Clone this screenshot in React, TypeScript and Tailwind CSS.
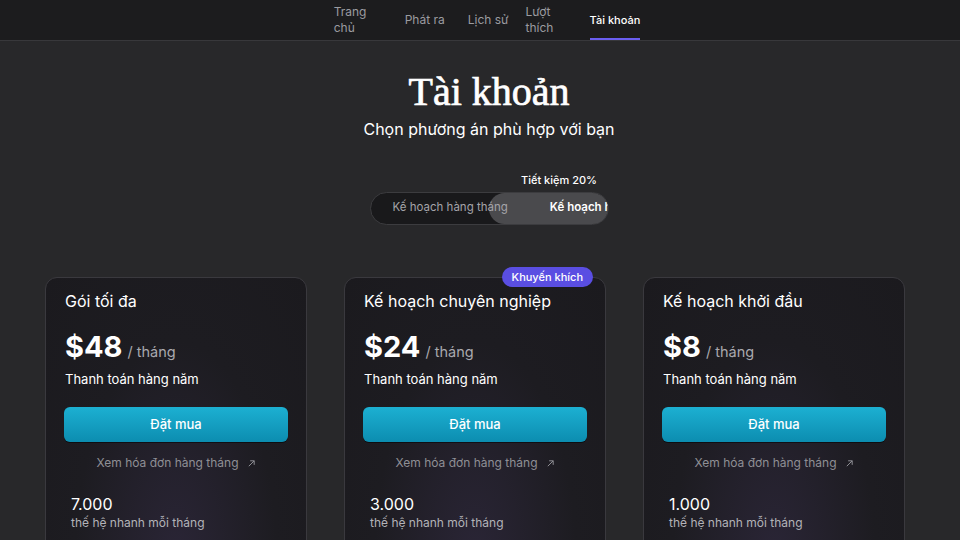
import React from "react";

type Plan = {
  name: string;
  price: string;
  credits: string;
  badge?: string;
};

const plans: Plan[] = [
  { name: "Gói tối đa", price: "$48", credits: "7.000" },
  { name: "Kế hoạch chuyên nghiệp", price: "$24", credits: "3.000", badge: "Khuyến khích" },
  { name: "Kế hoạch khởi đầu", price: "$8", credits: "1.000" },
];

const navItems = [
  { label: "Trang chủ", w: "w-[44px]", ml: "" },
  { label: "Phát ra", w: "", ml: "ml-[27px]" },
  { label: "Lịch sử", w: "", ml: "ml-[23px]" },
  { label: "Lượt thích", w: "w-[34px]", ml: "ml-[17px]" },
];

const PlanCard: React.FC<{ plan: Plan }> = ({ plan }) => {
  return (
    <div className="relative h-[300px] rounded-[12px] border border-[#3a393e] bg-[radial-gradient(ellipse_at_50%_95%,#2a2536_0%,#1d1c21_55%,#1b1a1e_100%)] px-[18px] pt-[11px]">
      {plan.badge && (
        <div className="absolute right-[12px] top-[-11px] rounded-full bg-[#5a4ee2] px-[10px] py-[2px] text-[11px] font-medium text-white">
          {plan.badge}
        </div>
      )}
      <div className="pl-[1px] text-[16px] text-white">{plan.name}</div>

      {/* price */}
      <div className="mt-[17px] flex items-baseline pl-[1px]">
        <span className="text-[29px] font-bold leading-[34px] text-white">{plan.price}</span>
        <span className="ml-[5px] text-[14.5px] text-[#a9a9ae]">/ tháng</span>
      </div>
      <div className="mt-[6px] pl-[1px] text-[13px] text-white">Thanh toán hàng năm</div>

      <button className="mt-[18px] h-[35px] w-full rounded-[6px] bg-gradient-to-b from-[#1cb0d2] to-[#0c8db0] text-[13px] font-medium text-white shadow-[0_1px_0_rgba(0,0,0,0.5)]">
        Đặt mua
      </button>

      <div className="mt-[12px] flex items-center justify-center gap-[8px] text-[12px] text-[#8f8f95]">
        <span>Xem hóa đơn hàng tháng</span>
        <svg width="9" height="9" viewBox="0 0 10 10" fill="none" stroke="currentColor" strokeWidth="1.1">
          <path d="M2 8 L8 2 M3.5 2 H8 V6.5" />
        </svg>
      </div>

      <div className="mt-[22px] pl-[7px]">
        <div className="text-[16px] leading-[20px] text-white">{plan.credits}</div>
        <div className="text-[12px] leading-[18px] text-[#b3b3b8]">thế hệ nhanh mỗi tháng</div>
      </div>
    </div>
  );
};

export default function App() {
  return (
    <div className="h-[540px] w-[960px] overflow-hidden bg-[#28282a] font-['Inter','Noto_Sans',sans-serif]">
      {/* Top navigation */}
      <nav className="flex h-[41px] items-stretch justify-center border-b border-[#38383b] bg-[#1c1c1e] pl-[14px] text-[12px] text-[#9b9ba0]">
        {navItems.map((item) => (
          <div key={item.label} className={`flex items-center leading-[16px] ${item.w} ${item.ml}`}>
            {item.label}
          </div>
        ))}
        <div className="relative ml-[30px] flex items-center text-[11px] font-medium text-white">
          Tài khoản
          <div className="absolute bottom-[0px] left-0 right-0 h-[2px] bg-[#6a5ef0]" />
        </div>
      </nav>

      {/* Heading */}
      <div className="mt-[27px] flex flex-col items-center pl-[18px]">
        <h1 className="font-['Liberation_Serif',serif] text-[40px] leading-[48px] text-white [-webkit-text-stroke:0.7px_white]">
          Tài khoản
        </h1>
        <p className="mt-[1px] text-[16px] text-white">Chọn phương án phù hợp với bạn</p>
      </div>

      {/* Billing toggle */}
      <div className="mt-[31px] flex flex-col items-center pl-[18px]">
        <div className="ml-[140px] text-[11px] font-medium text-white">Tiết kiệm 20%</div>
        <div className="relative mt-[3px] h-[33px] w-[239px] overflow-hidden rounded-full border border-[#3c3c3f] bg-[#19191b]">
          <div className="absolute left-[118px] top-[0px] h-full w-[140px] rounded-full bg-[#4a4a4d]" />
          <div className="relative flex h-full items-center whitespace-nowrap text-[11.5px]">
            <span className="ml-[22px] text-[#a4a4a9]">Kế hoạch hàng tháng</span>
            <span className="ml-[42px] font-semibold text-white">Kế hoạch hàng năm</span>
          </div>
        </div>
      </div>

      {/* Plans */}
      <div className="mt-[52px] grid grid-cols-[262px_262px_262px] gap-[37px] px-[45px]">
        {plans.map((p) => (
          <PlanCard key={p.name} plan={p} />
        ))}
      </div>
    </div>
  );
}
